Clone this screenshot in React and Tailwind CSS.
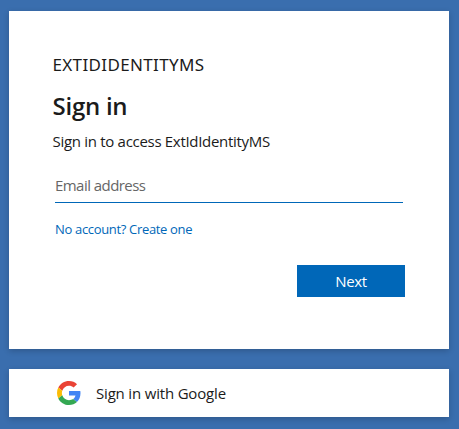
function GoogleLogo() {
  return (
    <svg viewBox="0 0 48 48" className="size-6 shrink-0" aria-hidden="true">
      <path fill="#EA4335" d="M24 9.5c3.54 0 6.71 1.22 9.21 3.6l6.85-6.85C35.9 2.38 30.47 0 24 0 14.62 0 6.51 5.38 2.56 13.22l7.98 6.19C12.43 13.72 17.74 9.5 24 9.5z" />
      <path fill="#4285F4" d="M46.98 24.55c0-1.57-.15-3.09-.38-4.55H24v9.02h12.94c-.58 2.96-2.26 5.48-4.78 7.18l7.73 6c4.51-4.18 7.09-10.36 7.09-17.65z" />
      <path fill="#FBBC05" d="M10.53 28.59c-.48-1.45-.76-2.99-.76-4.59s.27-3.14.76-4.59l-7.98-6.19C.92 16.46 0 20.12 0 24c0 3.88.92 7.54 2.56 10.78l7.97-6.19z" />
      <path fill="#34A853" d="M24 48c6.48 0 11.93-2.13 15.89-5.81l-7.73-6c-2.15 1.45-4.92 2.3-8.16 2.3-6.26 0-11.57-4.22-13.47-9.91l-7.98 6.19C6.51 42.62 14.62 48 24 48z" />
    </svg>
  );
}

export default function App() {
  return (
    <main className="flex h-[429px] w-[459px] flex-col gap-5 overflow-hidden bg-[#3a6eae] pt-[11px] pl-[9px] font-['Open_Sans',sans-serif] text-[15px] text-[#1b1b1b]">
      <section className="flex h-[338px] w-[440px] shrink-0 flex-col bg-white pt-11 pr-11 pl-[43.5px] shadow-[0_2px_6px_rgba(0,0,0,0.2)]">
        <div className="h-5 font-['Noto_Sans',sans-serif] text-[17px] leading-5 tracking-[0.35px]">EXTIDIDENTITYMS</div>
        <h1 className="mt-[15px] h-8 text-[24px] leading-8 font-semibold tracking-[-0.25px]">Sign in</h1>
        <p className="mt-[9px] h-5 text-[15px] leading-5 tracking-[-0.3px]">Sign in to access ExtIdIdentityMS</p>
        <input
          type="email"
          aria-label="Email address"
          placeholder="Email address"
          className="mt-[17px] ml-[2.5px] h-[35px] w-[348px] border-b border-[#0067b8] pb-px text-[15px] tracking-[-0.55px] outline-none placeholder:text-[#666666]"
        />
        <a href="#" className="mt-[16px] ml-[2.5px] h-5 text-[13px] leading-5 tracking-[-0.33px] text-[#0067b8]">
          No account? Create one
        </a>
        <button className="mt-[26px] h-8 w-[108px] self-end bg-[#0067b8] text-[15px] font-medium tracking-[-0.3px] text-white">Next</button>
      </section>
      <button className="flex h-12 w-[440px] shrink-0 items-center gap-[15px] bg-white pl-12 shadow-[0_2px_6px_rgba(0,0,0,0.2)]">
        <GoogleLogo />
        <span className="tracking-[-0.18px]">Sign in with Google</span>
      </button>
    </main>
  );
}
